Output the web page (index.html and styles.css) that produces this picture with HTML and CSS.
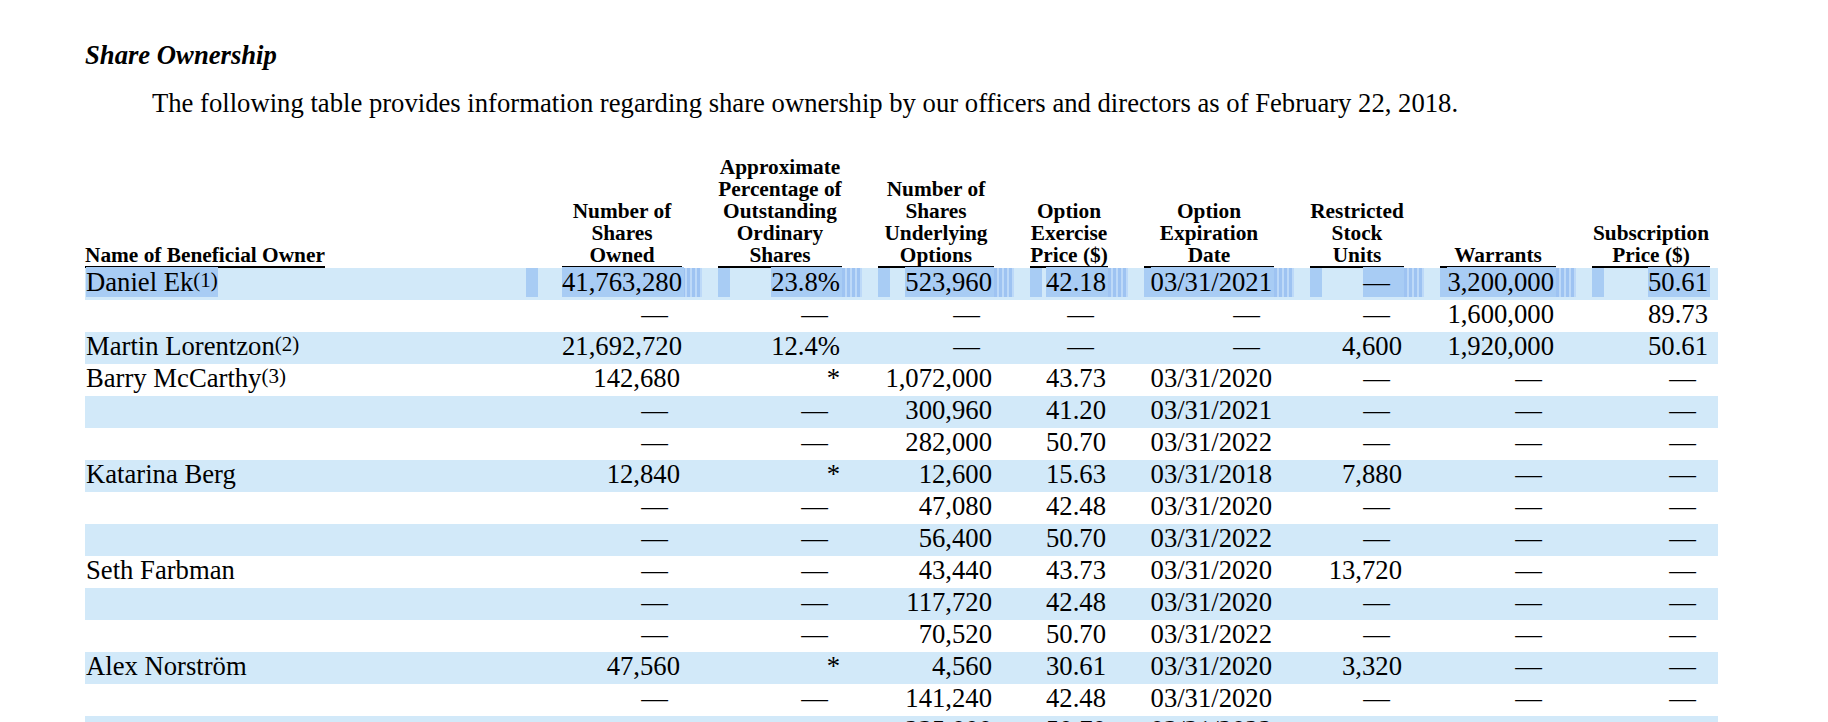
FILE: index.html
```html
<!DOCTYPE html>
<html lang="en">
<head>
<meta charset="utf-8">
<title>Share Ownership</title>
<link rel="stylesheet" href="styles.css">
</head>
<body>
<div class="page">
  <h2 class="title">Share Ownership</h2>
  <p class="intro">The following table provides information regarding share ownership by our officers and directors as of February 22, 2018.</p>

  <div class="table">
    <div class="row head">
      <div class="th name"><div class="u">Name of Beneficial Owner</div></div>
      <div class="th"><div class="u">Number of<br>Shares<br>Owned</div></div>
      <div class="th"><div class="u">Approximate<br>Percentage of<br>Outstanding<br>Ordinary<br>Shares</div></div>
      <div class="th"><div class="u">Number of<br>Shares<br>Underlying<br>Options</div></div>
      <div class="th"><div class="u">Option<br>Exercise<br>Price ($)</div></div>
      <div class="th"><div class="u">Option<br>Expiration<br>Date</div></div>
      <div class="th"><div class="u">Restricted<br>Stock<br>Units</div></div>
      <div class="th"><div class="u">Warrants</div></div>
      <div class="th"><div class="u">Subscription<br>Price ($)</div></div>
    </div>

    <div class="row band sel">
      <div class="td name"><span class="hl">Daniel Ek<sup class="fn">(1)</sup></span></div>
      <div class="td"><span class="v hl">41,763,280</span></div>
      <div class="td bar"><span class="v hl">23.8%</span></div>
      <div class="td bar"><span class="v hl">523,960</span></div>
      <div class="td bar"><span class="v hl">42.18</span></div>
      <div class="td bar"><span class="v hl">03/31/2021</span></div>
      <div class="td bar"><span class="d hl">—</span></div>
      <div class="td bar"><span class="v hl">3,200,000</span></div>
      <div class="td bar last-sel"><span class="v hl">50.61</span></div>
    </div>

    <div class="row">
      <div class="td name"></div>
      <div class="td"><span class="d">—</span></div>
      <div class="td"><span class="d">—</span></div>
      <div class="td"><span class="d">—</span></div>
      <div class="td"><span class="d">—</span></div>
      <div class="td"><span class="d">—</span></div>
      <div class="td"><span class="d">—</span></div>
      <div class="td"><span class="v">1,600,000</span></div>
      <div class="td"><span class="v">89.73</span></div>
    </div>

    <div class="row band">
      <div class="td name">Martin Lorentzon<sup class="fn">(2)</sup></div>
      <div class="td"><span class="v">21,692,720</span></div>
      <div class="td"><span class="v">12.4%</span></div>
      <div class="td"><span class="d">—</span></div>
      <div class="td"><span class="d">—</span></div>
      <div class="td"><span class="d">—</span></div>
      <div class="td"><span class="v">4,600</span></div>
      <div class="td"><span class="v">1,920,000</span></div>
      <div class="td"><span class="v">50.61</span></div>
    </div>

    <div class="row">
      <div class="td name">Barry McCarthy<sup class="fn">(3)</sup></div>
      <div class="td"><span class="v">142,680</span></div>
      <div class="td"><span class="v">*</span></div>
      <div class="td"><span class="v">1,072,000</span></div>
      <div class="td"><span class="v">43.73</span></div>
      <div class="td"><span class="v">03/31/2020</span></div>
      <div class="td"><span class="d">—</span></div>
      <div class="td"><span class="d">—</span></div>
      <div class="td"><span class="d">—</span></div>
    </div>

    <div class="row band">
      <div class="td name"></div>
      <div class="td"><span class="d">—</span></div>
      <div class="td"><span class="d">—</span></div>
      <div class="td"><span class="v">300,960</span></div>
      <div class="td"><span class="v">41.20</span></div>
      <div class="td"><span class="v">03/31/2021</span></div>
      <div class="td"><span class="d">—</span></div>
      <div class="td"><span class="d">—</span></div>
      <div class="td"><span class="d">—</span></div>
    </div>

    <div class="row">
      <div class="td name"></div>
      <div class="td"><span class="d">—</span></div>
      <div class="td"><span class="d">—</span></div>
      <div class="td"><span class="v">282,000</span></div>
      <div class="td"><span class="v">50.70</span></div>
      <div class="td"><span class="v">03/31/2022</span></div>
      <div class="td"><span class="d">—</span></div>
      <div class="td"><span class="d">—</span></div>
      <div class="td"><span class="d">—</span></div>
    </div>

    <div class="row band">
      <div class="td name">Katarina Berg</div>
      <div class="td"><span class="v">12,840</span></div>
      <div class="td"><span class="v">*</span></div>
      <div class="td"><span class="v">12,600</span></div>
      <div class="td"><span class="v">15.63</span></div>
      <div class="td"><span class="v">03/31/2018</span></div>
      <div class="td"><span class="v">7,880</span></div>
      <div class="td"><span class="d">—</span></div>
      <div class="td"><span class="d">—</span></div>
    </div>

    <div class="row">
      <div class="td name"></div>
      <div class="td"><span class="d">—</span></div>
      <div class="td"><span class="d">—</span></div>
      <div class="td"><span class="v">47,080</span></div>
      <div class="td"><span class="v">42.48</span></div>
      <div class="td"><span class="v">03/31/2020</span></div>
      <div class="td"><span class="d">—</span></div>
      <div class="td"><span class="d">—</span></div>
      <div class="td"><span class="d">—</span></div>
    </div>

    <div class="row band">
      <div class="td name"></div>
      <div class="td"><span class="d">—</span></div>
      <div class="td"><span class="d">—</span></div>
      <div class="td"><span class="v">56,400</span></div>
      <div class="td"><span class="v">50.70</span></div>
      <div class="td"><span class="v">03/31/2022</span></div>
      <div class="td"><span class="d">—</span></div>
      <div class="td"><span class="d">—</span></div>
      <div class="td"><span class="d">—</span></div>
    </div>

    <div class="row">
      <div class="td name">Seth Farbman</div>
      <div class="td"><span class="d">—</span></div>
      <div class="td"><span class="d">—</span></div>
      <div class="td"><span class="v">43,440</span></div>
      <div class="td"><span class="v">43.73</span></div>
      <div class="td"><span class="v">03/31/2020</span></div>
      <div class="td"><span class="v">13,720</span></div>
      <div class="td"><span class="d">—</span></div>
      <div class="td"><span class="d">—</span></div>
    </div>

    <div class="row band">
      <div class="td name"></div>
      <div class="td"><span class="d">—</span></div>
      <div class="td"><span class="d">—</span></div>
      <div class="td"><span class="v">117,720</span></div>
      <div class="td"><span class="v">42.48</span></div>
      <div class="td"><span class="v">03/31/2020</span></div>
      <div class="td"><span class="d">—</span></div>
      <div class="td"><span class="d">—</span></div>
      <div class="td"><span class="d">—</span></div>
    </div>

    <div class="row">
      <div class="td name"></div>
      <div class="td"><span class="d">—</span></div>
      <div class="td"><span class="d">—</span></div>
      <div class="td"><span class="v">70,520</span></div>
      <div class="td"><span class="v">50.70</span></div>
      <div class="td"><span class="v">03/31/2022</span></div>
      <div class="td"><span class="d">—</span></div>
      <div class="td"><span class="d">—</span></div>
      <div class="td"><span class="d">—</span></div>
    </div>

    <div class="row band">
      <div class="td name">Alex Norström</div>
      <div class="td"><span class="v">47,560</span></div>
      <div class="td"><span class="v">*</span></div>
      <div class="td"><span class="v">4,560</span></div>
      <div class="td"><span class="v">30.61</span></div>
      <div class="td"><span class="v">03/31/2020</span></div>
      <div class="td"><span class="v">3,320</span></div>
      <div class="td"><span class="d">—</span></div>
      <div class="td"><span class="d">—</span></div>
    </div>

    <div class="row">
      <div class="td name"></div>
      <div class="td"><span class="d">—</span></div>
      <div class="td"><span class="d">—</span></div>
      <div class="td"><span class="v">141,240</span></div>
      <div class="td"><span class="v">42.48</span></div>
      <div class="td"><span class="v">03/31/2020</span></div>
      <div class="td"><span class="d">—</span></div>
      <div class="td"><span class="d">—</span></div>
      <div class="td"><span class="d">—</span></div>
    </div>

    <div class="row band">
      <div class="td name"></div>
      <div class="td"><span class="d">—</span></div>
      <div class="td"><span class="d">—</span></div>
      <div class="td"><span class="v">235,000</span></div>
      <div class="td"><span class="v">50.70</span></div>
      <div class="td"><span class="v">03/31/2022</span></div>
      <div class="td"><span class="d">—</span></div>
      <div class="td"><span class="d">—</span></div>
      <div class="td"><span class="d">—</span></div>
    </div>
  </div>
</div>
</body>
</html>
```

FILE: styles.css
```css
:root {
  --band: #d2e9f9;
  --sel: #a8ccf4;
  --sel-dark: #9ec3f2;
  --sel-light: #bdd9f8;
}

html, body {
  margin: 0;
  background: #ffffff;
}

body {
  color: #000000;
  font-family: "Liberation Serif", "Times New Roman", Times, serif;
  overflow: hidden;
}

.page {
  padding: 39px 0 0 85px;
}

.title {
  margin: 0;
  font-size: 26.67px;
  line-height: 32px;
  font-weight: bold;
  font-style: italic;
}

.intro {
  margin: 16px 0 0 67px;
  font-size: 26.67px;
  line-height: 32px;
  white-space: nowrap;
}

.table {
  margin-top: 37px;
  width: 1633px;
}

.row {
  display: grid;
  grid-template-columns: 477px 156px 160px 152px 114px 166px 130px 152px 126px;
}

.row.head {
  align-items: end;
}

.th {
  padding-right: 36px;
  font-size: 21.33px;
  line-height: 22px;
  font-weight: bold;
  text-align: center;
  white-space: nowrap;
}

.th:last-child {
  padding-right: 8px;
}

.th .u {
  border-bottom: 2px solid #000000;
}

.th.name {
  text-align: left;
  padding-right: 0;
}

.th.name .u {
  width: max-content;
}

.row:not(.head) {
  height: 32px;
}

.row.band {
  background: var(--band);
}

.td {
  padding: 0 36px 4px 0;
  font-size: 26.67px;
  line-height: 28px;
  text-align: right;
  white-space: nowrap;
}

.td:last-child {
  padding-right: 8px;
}

.td.name {
  text-align: left;
  padding-left: 1px;
  padding-right: 0;
}

.td .v {
  padding-right: 2px;
}

.td .d {
  padding-right: 14px;
}

.fn {
  font-size: 21px;
  line-height: 1;
  vertical-align: 4px;
}

/* text selection artefact on the first data row */
.hl {
  background: var(--sel);
}

.sel .td {
  background-image:
    repeating-linear-gradient(90deg, var(--sel-dark) 0 3px, var(--sel-light) 3px 5px);
  background-size: 20px 29px;
  background-position: right 16px top;
  background-repeat: no-repeat;
}

.sel .td.bar {
  background-image:
    linear-gradient(var(--sel), var(--sel)),
    repeating-linear-gradient(90deg, var(--sel-dark) 0 3px, var(--sel-light) 3px 5px);
  background-size: 12px 29px, 20px 29px;
  background-position: left top, right 16px top;
  background-repeat: no-repeat, no-repeat;
}

.sel .td.last-sel {
  background-image: linear-gradient(var(--sel), var(--sel));
  background-size: 12px 29px;
  background-position: left top;
  background-repeat: no-repeat;
}

.sel .td.name {
  background-image: linear-gradient(var(--sel), var(--sel));
  background-size: 12px 29px;
  background-position: 441px top;
  background-repeat: no-repeat;
}
```
